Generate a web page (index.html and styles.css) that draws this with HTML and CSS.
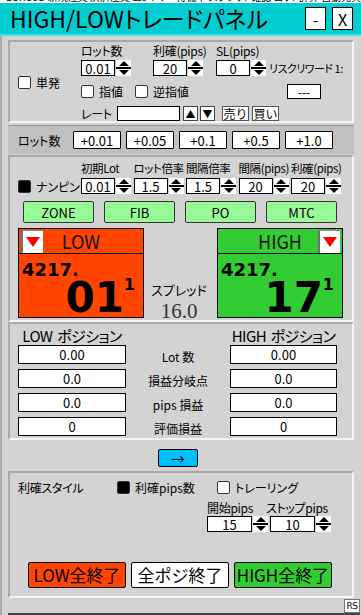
FILE: index.html
```html
<!DOCTYPE html>
<html lang="ja">

<head>
    <meta charset="UTF-8">
    <meta name="viewport" content="width=device-width, initial-scale=1.0">
    <title>HIGH/LOW trade panel</title>
    <link rel="stylesheet" href="styles.css">
</head>

<body>
    <div class="ticker"><span>EURUSD 新規注文 決済注文 エントリー待機中 スプレッド確認 ロット計算 自動売買 ナンピン設定</span></div>

    <!-- title bar -->
    <div class="titlebar">
        <h1>HIGH/LOWトレードパネル</h1>
        <div class="win_btns">
            <button class="win_btn">-</button>
            <button class="win_btn">X</button>
        </div>
    </div>

    <div class="panel">
        <!-- single order -->
        <div class="box order">
            <div class="order_left">
                <label class="check"><span class="tick"></span>単発</label>
            </div>
            <div class="order_fields">
                <span class="lbl">ロット数</span>
                <span class="lbl">利確(pips)</span>
                <span class="lbl">SL(pips)</span>
                <span></span>
                <div class="num"><span class="field">0.01</span><span class="spin"></span></div>
                <div class="num"><span class="field">20</span><span class="spin"></span></div>
                <div class="num"><span class="field">0</span><span class="spin"></span></div>
                <span class="risk">リスクリワード 1:</span>
            </div>
            <div class="limits">
                <label class="check"><span class="tick"></span>指値</label>
                <label class="check"><span class="tick"></span>逆指値</label>
                <span class="field rr">---</span>
            </div>
            <div class="rate">
                <span class="lbl rate_lbl">レート</span>
                <span class="field rate_in"></span>
                <button class="step_btn">▲</button>
                <button class="step_btn">▼</button>
                <button class="trade_btn sell">売り</button>
                <button class="trade_btn">買い</button>
            </div>
        </div>

        <!-- lot shortcuts -->
        <div class="lotbar">
            <span class="lot_lbl">ロット数</span>
            <button class="lot_btn">+0.01</button>
            <button class="lot_btn">+0.05</button>
            <button class="lot_btn">+0.1</button>
            <button class="lot_btn">+0.5</button>
            <button class="lot_btn">+1.0</button>
        </div>

        <!-- nanpin + quotes -->
        <div class="box nanpin">
            <div class="nanpin_head">
                <span></span>
                <span class="lbl">初期Lot</span>
                <span class="lbl">ロット倍率</span>
                <span class="lbl">間隔倍率</span>
                <span class="lbl">間隔(pips)</span>
                <span class="lbl">利確(pips)</span>
                <label class="check"><span class="tick on"></span>ナンピン</label>
                <div class="num"><span class="field">0.01</span><span class="spin"></span></div>
                <div class="num"><span class="field">1.5</span><span class="spin"></span></div>
                <div class="num"><span class="field">1.5</span><span class="spin"></span></div>
                <div class="num"><span class="field">20</span><span class="spin"></span></div>
                <div class="num"><span class="field">20</span><span class="spin"></span></div>
            </div>
            <div class="logic_row">
                <button class="logic_btn">ZONE</button>
                <button class="logic_btn">FIB</button>
                <button class="logic_btn">PO</button>
                <button class="logic_btn">MTC</button>
            </div>
            <div class="quotes">
                <div class="quote low">
                    <div class="quote_head">
                        <span class="tri_btn"></span>
                        <span class="side">LOW</span>
                        <span></span>
                    </div>
                    <div class="quote_body">
                        <div class="price_head">4217.</div>
                        <div class="price_big"><span class="big">01</span><span class="sup">1</span></div>
                    </div>
                </div>
                <div class="spread">
                    <span class="spread_lbl">スプレッド</span>
                    <span class="spread_val">16.0</span>
                </div>
                <div class="quote high">
                    <div class="quote_head">
                        <span></span>
                        <span class="side">HIGH</span>
                        <span class="tri_btn"></span>
                    </div>
                    <div class="quote_body">
                        <div class="price_head">4217.</div>
                        <div class="price_big"><span class="big">17</span><span class="sup">1</span></div>
                    </div>
                </div>
            </div>
        </div>

        <!-- positions -->
        <div class="box positions">
            <div class="pos_head">
                <span>LOW ポジション</span>
                <span></span>
                <span>HIGH ポジション</span>
            </div>
            <div class="pos_rows">
                <span class="pos_box">0.00</span><span class="pos_lbl">Lot 数</span><span class="pos_box">0.00</span>
                <span class="pos_box">0.0</span><span class="pos_lbl">損益分岐点</span><span class="pos_box">0.0</span>
                <span class="pos_box">0.0</span><span class="pos_lbl">pips 損益</span><span class="pos_box">0.0</span>
                <span class="pos_box">0</span><span class="pos_lbl">評価損益</span><span class="pos_box">0</span>
            </div>
        </div>

        <div class="arrow_row">
            <button class="arrow_btn">→</button>
        </div>

        <!-- take profit style + close all -->
        <div class="box settle">
            <div class="style_row">
                <span class="lbl">利確スタイル</span>
                <label class="check"><span class="tick on"></span>利確pips数</label>
                <label class="check"><span class="tick"></span>トレーリング</label>
            </div>
            <div class="trail">
                <span class="lbl">開始pips</span>
                <span class="lbl stop_lbl">ストップpips</span>
                <div class="num"><span class="field wide">15</span><span class="spin"></span></div>
                <div class="num"><span class="field wide">10</span><span class="spin"></span></div>
            </div>
            <div class="close_row">
                <button class="close_btn low_bg">LOW全終了</button>
                <button class="close_btn">全ポジ終了</button>
                <button class="close_btn high_bg">HIGH全終了</button>
            </div>
        </div>

        <div class="footer">
            <span class="rs">RS</span>
        </div>
    </div>
</body>

</html>
```

FILE: styles.css
```css
body {
    margin: 0;
    width: 361px;
    height: 615px;
    overflow: hidden;
    background: #d3d3d3;
    font-family: "Noto Sans CJK JP", "Noto Sans", sans-serif;
    font-size: 12px;
    font-feature-settings: "palt";
    color: #000;
}

button {
    font-family: inherit;
    color: #000;
    padding: 0;
    cursor: pointer;
}

.ticker {
    height: 3px;
    background: #fff;
    overflow: hidden;
}

.ticker span {
    display: block;
    font-size: 10px;
    line-height: 12px;
    margin-top: -9px;
    padding-left: 6px;
    white-space: nowrap;
}

.titlebar {
    height: 31px;
    background: #00cdd0;
    border-bottom: 2px solid #3fe4e4;
    display: flex;
    align-items: center;
    justify-content: space-between;
    padding: 0 8px 0 10px;
}

h1 {
    margin: 0;
    font-size: 23px;
    font-weight: normal;
    line-height: 31px;
    white-space: nowrap;
}

.win_btns {
    display: flex;
    gap: 6px;
}

.win_btn {
    width: 21px;
    height: 23px;
    background: #fff;
    border: 1px solid #000;
    font-size: 16px;
    line-height: 20px;
}

.panel {
    border-left: 2px solid #a9a9a9;
    padding: 4px 7px 0 6px;
}

.box {
    border: 2px solid;
    border-color: #a9a9a9 #f4f4f4 #f4f4f4 #a9a9a9;
}

.lbl {
    line-height: 14px;
    white-space: nowrap;
    letter-spacing: -0.3px;
}

.check {
    display: flex;
    align-items: center;
    gap: 5px;
    white-space: nowrap;
}

.tick {
    width: 13px;
    height: 13px;
    box-sizing: border-box;
    border: 1px solid #333;
    border-radius: 2px;
    background: #fff;
}

.tick.on {
    background: #000;
}

.field {
    box-sizing: border-box;
    width: 34px;
    height: 16px;
    border: 1px solid #000;
    background: #fff;
    display: flex;
    align-items: center;
    justify-content: center;
    font-size: 13px;
}

.field.wide {
    width: 45px;
}

.num {
    display: flex;
    gap: 1px;
}

/* up/down spinner: triangle, bar, triangle */
.spin {
    box-sizing: border-box;
    width: 15px;
    height: 16px;
    padding: 1px 0;
    display: flex;
    flex-direction: column;
    align-items: center;
    justify-content: space-between;
    background: linear-gradient(#000, #000) center / 100% 2px no-repeat, #fff;
}

.spin::before,
.spin::after {
    content: "";
    border: solid transparent;
}

.spin::before {
    border-width: 0 5px 5px;
    border-bottom-color: #000;
}

.spin::after {
    border-width: 5px 5px 0;
    border-top-color: #000;
}

/* single order */
.order {
    display: grid;
    grid-template-columns: 71px 1fr;
    padding-top: 2px;
}

.order_left {
    grid-row: 1 / 4;
    display: flex;
    align-items: center;
    padding-left: 8px;
}

.order_fields {
    display: grid;
    grid-template-columns: 72px 63px 53px auto;
    row-gap: 2px;
}

.risk {
    font-size: 11px;
    line-height: 16px;
    white-space: nowrap;
    letter-spacing: -0.5px;
}

.limits {
    grid-column: 2;
    display: grid;
    grid-template-columns: 54px 152px 34px;
    align-items: center;
    height: 15px;
    margin-top: 7px;
}

.rr {
    height: 15px;
    font-size: 12px;
}

.rate {
    grid-column: 2;
    display: flex;
    align-items: center;
    height: 15px;
    margin-top: 8px;
}

.rate_lbl {
    width: 36px;
}

.rate_in {
    width: 63px;
    height: 15px;
    margin-right: 3px;
}

.step_btn {
    width: 15px;
    height: 15px;
    box-sizing: border-box;
    background: #fff;
    border: 1px solid #444;
    font-size: 10px;
    line-height: 12px;
    margin-right: 2px;
}

.trade_btn {
    width: 27px;
    height: 15px;
    box-sizing: border-box;
    background: #fff;
    border: 1px solid #555;
    font-size: 12px;
    line-height: 12px;
}

.sell {
    margin: 0 3px 0 5px;
}

/* lot bar */
.lotbar {
    margin-top: 2px;
    height: 28px;
    border-top: 1px solid #999;
    background: #c0c0c0;
    display: flex;
    align-items: center;
    gap: 5px;
    padding-left: 10px;
}

.lot_lbl {
    width: 50px;
}

.lot_btn {
    width: 48px;
    height: 18px;
    box-sizing: border-box;
    background: #fff;
    border: 1px solid #000;
    border-radius: 1px;
    font-size: 13px;
    line-height: 15px;
}

/* nanpin */
.nanpin {
    margin-top: 1px;
    padding: 4px 0 2px;
}

.nanpin_head {
    display: grid;
    grid-template-columns: 71px repeat(5, 52.5px);
    row-gap: 3px;
}

.nanpin_head .check {
    padding-left: 8px;
}

.nanpin_head .lbl {
    font-size: 11.5px;
    letter-spacing: -0.4px;
}

.logic_row {
    display: flex;
    gap: 10px;
    padding-left: 13px;
    margin-top: 6px;
}

.logic_btn {
    width: 71px;
    height: 22px;
    box-sizing: border-box;
    background: #98fb98;
    border: 1px solid #333;
    border-radius: 2px;
    font-size: 13px;
}

.quotes {
    display: grid;
    grid-template-columns: 126px 73px 126px;
    padding-left: 8px;
    margin-top: 5px;
    height: 90px;
}

.quote_head {
    height: 26px;
    box-sizing: border-box;
    border: 1px solid #000;
    display: grid;
    grid-template-columns: 24px 1fr 24px;
    align-items: center;
}

.tri_btn {
    width: 22px;
    height: 23px;
    box-sizing: border-box;
    background: #fff;
    border-left: 2px solid #707070;
    border-top: 1px solid #8a8a8a;
    display: flex;
    align-items: center;
    justify-content: center;
}

.low .tri_btn {
    margin-left: 2px;
}

.tri_btn::after {
    content: "";
    border-left: 7px solid transparent;
    border-right: 7px solid transparent;
    border-top: 10px solid #f00;
}

.side {
    text-align: center;
    font-size: 18px;
    line-height: 22px;
    color: #111;
}

.quote_body {
    height: 64px;
    box-sizing: border-box;
    border: 1px solid #000;
    border-top: 0;
    padding-top: 7px;
    font-family: "DejaVu Sans", sans-serif;
    font-weight: bold;
}

.price_head {
    font-size: 18px;
    line-height: 18px;
    padding-left: 3px;
}

.price_big {
    display: flex;
    justify-content: flex-end;
    align-items: flex-start;
    margin-top: -2px;
    padding-right: 8px;
}

.big {
    font-size: 42px;
    line-height: 41px;
}

.sup {
    font-size: 16px;
    line-height: 16px;
}

.spread {
    display: flex;
    flex-direction: column;
    align-items: center;
    justify-content: flex-end;
    padding-right: 3px;
}

.spread_lbl {
    font-size: 13px;
    line-height: 15px;
    margin-bottom: 4px;
}

.spread_val {
    font-family: "Liberation Serif", serif;
    font-size: 21px;
    line-height: 20px;
    color: #333;
    margin-bottom: -3px;
}

/* positions */
.positions {
    padding: 3px 0 2px 8px;
}

.pos_head,
.pos_rows {
    display: grid;
    grid-template-columns: 108px 104px 107px;
}

.pos_head span {
    font-size: 15px;
    line-height: 17px;
    letter-spacing: -0.6px;
    word-spacing: 2px;
    text-align: center;
    white-space: nowrap;
}

.pos_rows {
    margin-top: 1px;
    grid-auto-rows: 19px;
    row-gap: 5px;
}

.pos_box {
    box-sizing: border-box;
    border: 1px solid #000;
    background: #fff;
    display: flex;
    align-items: center;
    justify-content: center;
    font-size: 13px;
}

.pos_lbl {
    text-align: center;
    line-height: 14px;
    padding-top: 5px;
}

.arrow_row {
    height: 31px;
    box-sizing: border-box;
    padding: 9px 0 0 150px;
}

.arrow_btn {
    width: 40px;
    height: 18px;
    box-sizing: border-box;
    background: #00bfff;
    border: 1px solid #000;
    border-radius: 2px;
    font-size: 14px;
    line-height: 14px;
}

/* settle */
.settle {
    padding: 6px 0 8px;
}

.style_row {
    display: grid;
    grid-template-columns: 99px 100px auto;
    align-items: center;
    height: 15px;
    padding-left: 8px;
}

.trail {
    display: grid;
    grid-template-columns: 63px 63px;
    margin: 7px 0 0 197px;
    row-gap: 1px;
}

.stop_lbl {
    margin-left: -4px;
}

.close_row {
    display: flex;
    gap: 5px;
    padding-left: 18px;
    margin-top: 30px;
}

.close_btn {
    width: 98px;
    height: 26px;
    box-sizing: border-box;
    background: #fff;
    border: 1px solid #000;
    border-radius: 2px;
    font-size: 17px;
    line-height: 22px;
    white-space: nowrap;
}

.low .quote_head,
.low .quote_body,
.close_btn.low_bg {
    background: #ff4500;
}

.high .quote_head,
.high .quote_body,
.close_btn.high_bg {
    background: #32cd32;
}

.footer {
    height: 14px;
    margin-right: -6px;
    padding-top: 1px;
    display: flex;
    justify-content: flex-end;
    border-bottom: 2px solid #444;
}

.rs {
    width: 16px;
    height: 14px;
    box-sizing: border-box;
    border: 1px solid #777;
    background: #fff;
    font-family: "DejaVu Sans", sans-serif;
    font-size: 9px;
    line-height: 12px;
    text-align: center;
    letter-spacing: -0.5px;
}
```
